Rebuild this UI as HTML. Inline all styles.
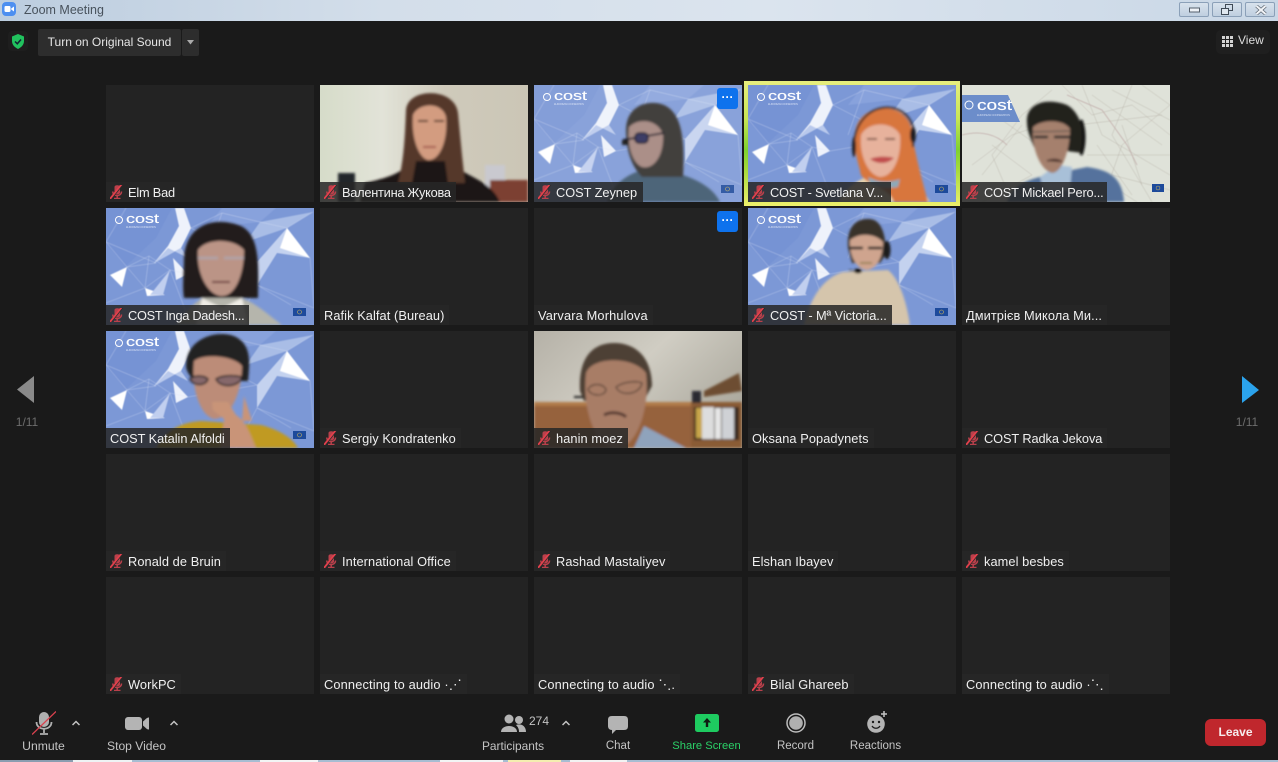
<!DOCTYPE html>
<html><head><meta charset="utf-8"><title>Zoom Meeting</title>
<style>
*{box-sizing:border-box}
html,body{margin:0;padding:0}
body{width:1278px;height:762px;overflow:hidden;background:#1a1a1a;position:relative;font-family:"Liberation Sans","Noto Sans CJK JP",sans-serif;color:#e8e8e8}
.abs{position:absolute}
#tb{left:0;top:0;width:1278px;height:21px;background:linear-gradient(90deg,#bccddf 0,#d3deea 30%,#dbe4ee 60%,#c9d7e6 100%)}
#tb span{position:absolute;left:24px;top:3px;font-size:12.500px;color:#48525c}
.wb{position:absolute;top:2px;width:30px;height:15px;border:1px solid #8ba0b8;border-radius:2px;background:linear-gradient(#d8e2ed,#bfcfe0)}
.t{position:absolute;width:208px;height:117px;background:#232323;overflow:hidden}
.t svg{position:absolute;left:0;top:0}
.l{position:absolute;left:0;bottom:0;height:20px;background:rgba(38,38,38,.86);font-size:12.800px;line-height:21px;padding:0 5px 0 4px;white-space:nowrap;color:#f0f0f0;letter-spacing:.08px}
.l.m{padding-left:22px}
.l.m svg{left:4px;top:3px}
.dots{position:absolute;right:4px;top:3px;width:21px;height:21px;background:#0e72ed;border-radius:3px;color:#fff;font-size:12px;font-weight:bold;line-height:19px;text-align:center;letter-spacing:0}
.tl{position:absolute;top:739px;font-size:11.500px;line-height:14px;color:#c4c4c4;transform:translateX(-50%);white-space:nowrap}
.car{position:absolute;top:720px}
.cost{font-family:"Liberation Sans",sans-serif;fill:#fff;font-size:13px;stroke:#fff;stroke-width:.15}
.cs{font-family:"Liberation Sans",sans-serif;fill:#dfe7f7;font-size:2.800px;opacity:.8}
.nv{position:absolute;top:415px;font-size:12px;line-height:14px;color:#6d6d6d;transform:translateX(-50%)}
</style></head><body>
<svg width="0" height="0" style="position:absolute">
<defs>
<filter id="b1"><feGaussianBlur stdDeviation="1.200"/></filter>
<filter id="b2"><feGaussianBlur stdDeviation=".4"/></filter>
<symbol id="net" viewBox="0 0 208 117">
<rect width="208" height="117" fill="#7c98d6"/>
<g filter="url(#b2)">
<path d="M0 0H66L50 30 20 58 0 36Z" fill="#7693d4"/>
<path d="M154 14 207 4 181 20 140 34Z" fill="#a9bde6"/>
<path d="M116 0H170L154 14 100 20Z" fill="#88a2dc"/>
<path d="M69 0H78L85 20 75 40 48 55 62 38 73 18Z" fill="#eef2fb"/>
<path d="M75 40 82 50 62 40 48 55Z" fill="#b9c9ec"/>
<path d="M181 20 204 50 171 45 151 77 151 54Z" fill="#c4d2ef"/>
<path d="M181 20 204 50 174 40Z" fill="#fff"/>
<path d="M4 67 21 59 16 79Z" fill="#fff"/>
<path d="M39 80 59 87 41 88Z" fill="#fff"/>
<path d="M67 50 82 66 70 72Z" fill="#eef2fb"/>
<path d="M44 87 64 62 57 87Z" fill="#c1cfef"/>
<g stroke="#dbe4f7" stroke-width=".45" fill="none" opacity=".65">
<path d="M0 34 50 55 21 59 43 48 64 62 82 66 151 54M43 48 39 80 64 62M21 59 39 80 0 95M85 20 116 5 154 14 181 20M85 20 151 54M116 5 100 50M204 50 208 100 151 77 185 97M0 34 20 0M0 34 21 59M151 77 130 117M64 62 85 117M181 20 207 4"/>
</g>
</g>
<rect x="187" y="100" width="13" height="8" fill="#1d4a9b"/>
<circle cx="193.500" cy="104" r="2" fill="none" stroke="#cbb45a" stroke-width=".6"/>
</symbol>
<symbol id="mic" viewBox="0 0 14 14">
<path d="M4.500 2C4.500 -.3 10 -.3 10 2L10 7.500C10 10 4.500 10 4.500 7.500Z" fill="#b9404b"/>
<path d="M2.800 6.500C2.800 12 11.500 12 11.500 6.500M7.200 11V13M4 13.500H10.500" stroke="#b9404b" stroke-width="1.500" fill="none"/>
<path d="M1 14.500 13 -.5" stroke="#2a2a2a" stroke-width="1"/>
<path d="M0 14 11.500 -.5" stroke="#e2404c" stroke-width="1.800"/>
</symbol>
</defs>
</svg>

<div id="tb" class="abs">
<svg class="abs" style="left:2px;top:2px" width="14" height="14" viewBox="0 0 14 14"><rect width="14" height="14" rx="4" fill="#4d8ff0"/><rect x="2.500" y="4" width="6" height="6" rx="1.200" fill="#fff"/><path d="M9.200 6.500 12 4.500V9.500L9.200 7.500Z" fill="#fff"/></svg>
<span>Zoom Meeting</span>
<div class="wb" style="left:1179px"><svg class="abs" style="left:9px;top:4px" width="12" height="6"><rect x=".5" y="1" width="10" height="4" fill="#eef2f7" stroke="#55606c"/></svg></div>
<div class="wb" style="left:1212px"><svg class="abs" style="left:8px;top:1px" width="13" height="12"><rect x="4.500" y=".5" width="7" height="6" fill="none" stroke="#3f4a56"/><rect x=".5" y="4.500" width="7" height="6" fill="#dfe7ef" stroke="#3f4a56"/></svg></div>
<div class="wb" style="left:1245px"><svg class="abs" style="left:9px;top:2px" width="12" height="10"><path d="M1.500 1 10.500 9M10.500 1 1.500 9" stroke="#59636e" stroke-width="3.400"/><path d="M1.500 1 10.500 9M10.500 1 1.500 9" stroke="#f2f4f7" stroke-width="2"/></svg></div>
</div>

<div class="abs" style="left:8px;top:31px;width:20px;height:20px;background:#1e1e1e;border-radius:4px"></div>
<svg class="abs" style="left:11px;top:34px" width="14" height="15" viewBox="0 0 14 15"><path d="M7 0 13 2.500V7C13 11 10 13.500 7 15 4 13.500 1 11 1 7V2.500Z" fill="#21c25e"/><path d="M4 7.500 6.300 9.800 10 5.500" stroke="#123" stroke-width="1.500" fill="none"/></svg>
<div class="abs" style="left:38px;top:29px;width:143px;height:27px;background:#2d2d2d;border-radius:2px;font-size:12px;line-height:26px;text-align:center;color:#e6e6e6">Turn on Original Sound</div>
<div class="abs" style="left:182px;top:29px;width:17px;height:27px;background:#2d2d2d;border-radius:2px"><svg class="abs" style="left:5px;top:11px" width="8" height="5"><path d="M0 0H7L3.500 4.500Z" fill="#aaa"/></svg></div>
<div class="abs" style="left:1216px;top:30px;width:54px;height:24px;background:#1f1f1f;border-radius:5px"></div>
<svg class="abs" style="left:1222px;top:36px" width="11" height="11"><g fill="#d4d4d4"><rect width="3" height="3"/><rect x="4" width="3" height="3"/><rect x="8" width="3" height="3"/><rect y="4" width="3" height="3"/><rect x="4" y="4" width="3" height="3"/><rect x="8" y="4" width="3" height="3"/><rect y="8" width="3" height="3"/><rect x="4" y="8" width="3" height="3"/><rect x="8" y="8" width="3" height="3"/></g></svg>
<div class="abs" style="left:1238px;top:33px;font-size:12px;line-height:15px;color:#ddd">View</div>

<svg class="abs" style="left:17px;top:376px" width="18" height="28"><path d="M0 13.500 17 0V27Z" fill="#8a8a8a"/></svg>
<div class="nv" style="left:27px">1/11</div>
<svg class="abs" style="left:1242px;top:376px" width="18" height="28"><path d="M17 14 0 0V27Z" fill="#2ba3ec"/></svg>
<div class="nv" style="left:1247px">1/11</div>

<!-- row 1 -->
<div class="t" style="left:106px;top:85px"><div class="l m" style="letter-spacing:-.2px"><svg width="14" height="14"><use href="#mic"/></svg>Elm Bad</div></div>

<div class="t" style="left:320px;top:85px">
<svg width="208" height="117" viewBox="0 0 208 117">
<defs><linearGradient id="w1" x1="0" x2="1" y1="0" y2="0"><stop offset="0" stop-color="#d6dcc9"/><stop offset=".3" stop-color="#e2e3d8"/><stop offset=".6" stop-color="#cfcabb"/><stop offset="1" stop-color="#cbc6b6"/></linearGradient></defs>
<rect width="208" height="117" fill="url(#w1)"/>
<g filter="url(#b1)">
<rect x="18" y="88" width="17" height="29" fill="#22262a"/>
<path d="M165 80h20v25h-20z" fill="#c9c9cf"/><rect x="170" y="95" width="38" height="22" fill="#7c3f30"/>
<path d="M45 98C70 92 85 88 92 72H128C135 90 170 92 180 117H40Z" fill="#1b1515"/>
<path d="M86 25C88 2 135 2 138 28L142 70 145 98H128L125 76H96L92 98H78C84 75 85 50 86 25Z" fill="#54382a"/>
<path d="M93 30C98 18 122 16 126 32 128 55 120 75 109 75 100 75 91 55 93 30Z" fill="#d39c80"/>
<path d="M98 36h10M114 36h10" stroke="#4a2f22" stroke-width="1.800"/><path d="M103 62h13" stroke="#a65a50" stroke-width="2"/>
</g></svg>
<div class="l m" style="letter-spacing:-.25px"><svg width="14" height="14"><use href="#mic"/></svg>Валентина Жукова</div></div>

<div class="t" style="left:534px;top:85px">
<svg width="208" height="117" viewBox="0 0 208 117"><use href="#net" width="208" height="117"/>
<rect width="208" height="117" fill="#fff" opacity=".1"/>
<text class="cost" x="20" y="15" textLength="33" lengthAdjust="spacingAndGlyphs">cost</text><circle cx="13" cy="12" r="3.500" fill="none" stroke="#fff"/><text class="cs" x="20" y="20" textLength="30">EUROPEAN COOPERATION</text>
<g filter="url(#b1)">
<path d="M73 117C78 100 92 90 108 85L130 85C155 90 178 100 186 117Z" fill="#4d6579"/>
<path d="M92 45C92 20 115 14 130 20 148 28 151 55 149 92H108C96 80 92 62 92 45Z" fill="#42403e"/>
<path d="M95 42C105 32 125 35 129 50 130 70 120 85 108 82 98 78 93 60 95 42Z" fill="#ab8f88"/>
<path d="M89 55 130 48" stroke="#17192a" stroke-width="1.800"/><rect x="101" y="48" width="13" height="10" rx="4" fill="#3e3c66" stroke="#17192a" stroke-width="1.500"/>
<rect x="88" y="55" width="7" height="5" fill="#222"/></g>
</svg>
<div class="dots">···</div>
<div class="l m" style="padding-right:6px;letter-spacing:-.05px"><svg width="14" height="14"><use href="#mic"/></svg>COST Zeynep</div></div>

<div class="abs" style="left:744px;top:81px;width:216px;height:125px;background:linear-gradient(#e7ee7e 0,#c9e655 30%,#7fd12f 55%,#a4da39 70%,#eef06c 100%)"></div>
<div class="t" style="left:748px;top:85px;height:117px">
<svg width="208" height="117" viewBox="0 0 208 117"><use href="#net" width="208" height="117"/>
<text class="cost" x="20" y="15" textLength="33" lengthAdjust="spacingAndGlyphs">cost</text><circle cx="13" cy="12" r="3.500" fill="none" stroke="#fff"/><text class="cs" x="20" y="20" textLength="30">EUROPEAN COOPERATION</text>
<g filter="url(#b1)">
<path d="M90 117C100 100 112 94 124 90H150C165 92 175 105 182 117Z" fill="#e8d4ae"/>
<path d="M107 50C108 18 155 14 163 42 166 65 174 95 180 117H146C140 100 112 100 112 85 108 72 106 60 107 50Z" fill="#d8763e"/>
<path d="M113 50C120 36 145 36 152 50 154 70 146 92 132 92 120 90 111 70 113 50Z" fill="#e7b29c"/>
<path d="M119 54h10M137 54h10" stroke="#5a3328" stroke-width="1.500"/><path d="M122 74C130 80 140 79 146 73 140 71 128 71 122 74Z" fill="#c14e4e"/>
<path d="M106 62C106 18 155 10 165 42V62" fill="none" stroke="#1d1d22" stroke-width="1.800"/><ellipse cx="106" cy="62" rx="2" ry="10" fill="#1d1d22"/><ellipse cx="165" cy="50" rx="3" ry="8" fill="#1d1d22"/>
<path d="M120 92C128 96 138 99 152 94L150 102C138 104 128 102 122 99Z" fill="#8ea9b8"/></g>
</svg>
<div class="l m" style="padding-right:8px;letter-spacing:-.25px"><svg width="14" height="14"><use href="#mic"/></svg>COST - Svetlana V...</div></div>

<div class="t" style="left:962px;top:85px">
<svg width="208" height="117" viewBox="0 0 208 117">
<rect width="208" height="117" fill="#dfe2d9"/>
<g stroke="#b3aca2" stroke-width=".4" fill="none" opacity=".9" filter="url(#b2)"><path d="M100 0 130 30 170 20 208 50M120 0 140 50 208 90M170 0 150 50 190 117M90 5 60 30 30 70 50 117M208 20 160 60 140 117M30 60 70 90 20 117M10 80 50 50 80 40M40 35 75 60M150 5 208 35M125 70 208 70M150 90 208 105M160 40 180 100M130 10 200 60M115 40 200 30M125 85 175 117M60 40 20 90M180 0 208 20M135 60 170 110"/><path d="M0 50C20 45 35 50 45 60M105 10 140 25 165 60 175 80" stroke="#c0aaa8" stroke-width=".8"/></g>
<path d="M0 10H46L58 37H0Z" fill="#6c8dca"/>
<text class="cost" x="15" y="25" style="font-size:15px" textLength="35" lengthAdjust="spacingAndGlyphs">cost</text><circle cx="7" cy="20" r="4" fill="none" stroke="#fff"/><text class="cs" x="15" y="31" textLength="33">EUROPEAN COOPERATION</text>
<rect x="190" y="99" width="12" height="8" fill="#1d4a9b"/><circle cx="196" cy="103" r="2" fill="none" stroke="#cbb45a" stroke-width=".5"/>
<g filter="url(#b1)">
<path d="M45 117C50 100 65 95 85 90L125 82C145 85 160 90 162 117Z" fill="#54729d"/>
<path d="M78 92 95 80 110 82 108 105 82 108Z" fill="#a8c0d8"/>
<path d="M65 38C63 18 85 12 105 20 120 28 125 55 121 68L72 62C68 52 65 45 65 38Z" fill="#22201f"/>
<path d="M71 42C80 34 102 34 108 44 108 65 100 88 90 88 78 85 69 62 71 42Z" fill="#a5806d"/>
<path d="M72 52H86M92 52H108" stroke="#2c2a2a" stroke-width="2.500"/><path d="M70 47 108 46" stroke="#444" stroke-width="1"/><path d="M85 76C90 74 96 74 100 77" stroke="#5a3c36" stroke-width="2"/>
<path d="M119 35C123 45 123 60 119 70" stroke="#111" stroke-width="3" fill="none"/></g>
</svg>
<div class="l m" style="padding-right:3px;letter-spacing:-.2px"><svg width="14" height="14"><use href="#mic"/></svg>COST Mickael Pero...</div></div>

<!-- row 2 -->
<div class="t" style="left:106px;top:208px">
<svg width="208" height="117" viewBox="0 0 208 117"><use href="#net" width="208" height="117"/>
<text class="cost" x="20" y="15" textLength="33" lengthAdjust="spacingAndGlyphs">cost</text><circle cx="13" cy="12" r="3.500" fill="none" stroke="#fff"/><text class="cs" x="20" y="20" textLength="30">EUROPEAN COOPERATION</text>
<g filter="url(#b1)">
<path d="M70 117C82 100 92 92 100 88L135 90C150 95 160 105 176 117Z" fill="#b5b5ac"/>
<path d="M78 50C80 15 110 8 135 18 155 28 152 60 152 90H78C76 78 78 65 78 50Z" fill="#241a1c"/>
<path d="M92 42C100 30 128 30 138 42 138 65 130 88 116 88 102 88 90 65 92 42Z" fill="#bb9486"/>
<path d="M92 50H112M118 50H138" stroke="#aab" stroke-width="3" opacity=".6"/><path d="M106 74H124" stroke="#6b3d3b" stroke-width="2"/>
<path d="M96 90 116 100 136 90 142 117H90Z" fill="#f0ede6"/></g>
</svg>
<div class="l m" style="letter-spacing:-.3px"><svg width="14" height="14"><use href="#mic"/></svg>COST Inga Dadesh...</div></div>

<div class="t" style="left:320px;top:208px"><div class="l">Rafik Kalfat (Bureau)</div></div>
<div class="t" style="left:534px;top:208px"><div class="dots">···</div><div class="l" style="letter-spacing:.15px">Varvara Morhulova</div></div>

<div class="t" style="left:748px;top:208px">
<svg width="208" height="117" viewBox="0 0 208 117"><use href="#net" width="208" height="117"/>
<text class="cost" x="20" y="15" textLength="33" lengthAdjust="spacingAndGlyphs">cost</text><circle cx="13" cy="12" r="3.500" fill="none" stroke="#fff"/><text class="cs" x="20" y="20" textLength="30">EUROPEAN COOPERATION</text>
<g filter="url(#b1)">
<path d="M56 117C62 90 75 70 95 64L140 62C150 70 158 90 162 117Z" fill="#d5c5ac"/>
<path d="M100 40C98 15 112 10 122 11 134 12 138 28 138 46L132 55H104Z" fill="#37302c"/>
<path d="M102 32C112 24 128 26 135 34 135 50 128 62 118 62 108 60 101 48 102 32Z" fill="#cfa48e"/>
<path d="M102 40H115M120 40H134" stroke="#1a1a1a" stroke-width="2.500"/><path d="M112 55H124" stroke="#874" stroke-width="1.500"/>
<ellipse cx="139" cy="42" rx="3.500" ry="9" fill="#1c1c1f"/><path d="M101 62C105 63 110 64 112 62" stroke="#111" stroke-width="1" fill="none"/><ellipse cx="110" cy="63" rx="4" ry="2.500" fill="#111"/>
</g>
</svg>
<div class="l m" style="letter-spacing:-.1px"><svg width="14" height="14"><use href="#mic"/></svg>COST - Mª Victoria...</div></div>

<div class="t" style="left:962px;top:208px"><div class="l">Дмитрієв Микола Ми...</div></div>

<!-- row 3 -->
<div class="t" style="left:106px;top:331px">
<svg width="208" height="117" viewBox="0 0 208 117"><use href="#net" width="208" height="117"/>
<text class="cost" x="20" y="15" textLength="33" lengthAdjust="spacingAndGlyphs">cost</text><circle cx="13" cy="12" r="3.500" fill="none" stroke="#fff"/><text class="cs" x="20" y="20" textLength="30">EUROPEAN COOPERATION</text>
<g filter="url(#b1)">
<path d="M50 117C60 100 72 92 95 90L155 94C170 98 185 105 192 117Z" fill="#c09a20"/>
<path d="M80 35C80 5 115 -2 130 6 145 14 144 30 142 50L88 50C84 45 80 40 80 35Z" fill="#242022"/>
<path d="M88 30C98 22 128 25 136 35 136 60 125 88 108 88 95 85 85 60 88 30Z" fill="#bc8c78"/>
<path d="M84 48C88 44 98 44 102 48 100 55 88 56 84 48ZM110 48C116 44 128 44 136 46 134 56 114 58 110 48Z" fill="#86686a" stroke="#1e1a1e" stroke-width="1.500"/>
<path d="M106 71H122L130 84C140 90 145 105 150 117H115C115 105 118 95 118 88L107 79Z" fill="#c99478"/><path d="M138 65 146 90 136 90Z" fill="#c99478"/></g>
</svg>
<div class="l" style="letter-spacing:-.05px">COST Katalin Alfoldi</div></div>

<div class="t" style="left:320px;top:331px"><div class="l m"><svg width="14" height="14"><use href="#mic"/></svg>Sergiy Kondratenko</div></div>

<div class="t" style="left:534px;top:331px">
<svg width="208" height="117" viewBox="0 0 208 117">
<defs><linearGradient id="w2" x1="0" x2="1" y1="0" y2=".6"><stop offset="0" stop-color="#b5b1a7"/><stop offset=".5" stop-color="#d0cdc3"/><stop offset="1" stop-color="#aca99e"/></linearGradient></defs>
<rect width="208" height="117" fill="url(#w2)"/>
<g filter="url(#b1)">
<rect x="0" y="74" width="208" height="43" fill="#96623c"/><rect x="0" y="71" width="160" height="4" fill="#b17a4a"/>
<rect x="157" y="71" width="51" height="46" fill="#8a5b36"/><rect x="160" y="76" width="45" height="33" fill="#3a2c20"/>
<rect x="162" y="77" width="6" height="30" fill="#c7a54a"/><rect x="168" y="76" width="12" height="32" fill="#ddd"/><rect x="181" y="77" width="6" height="31" fill="#e7e7e7"/><rect x="188" y="77" width="12" height="31" fill="#cfd1d5"/>
<path d="M170 60 205 42 208 60 170 66Z" fill="#6d4e33"/><rect x="158" y="60" width="9" height="12" fill="#2a2a30"/>
<path d="M110 95 152 117H100Z" fill="#8fa3bc"/>
<path d="M46 60C44 25 60 11 82 12 105 13 118 30 118 55L112 66 50 70Z" fill="#4e4134"/>
<path d="M52 42C58 25 100 25 112 42 116 75 104 117 82 117 60 117 48 75 52 42Z" fill="#a87d66"/>
<path d="M54 58C58 52 68 52 72 58 72 66 56 66 54 58ZM82 56C90 50 104 50 108 52 106 64 86 66 82 56Z" fill="none" stroke="#2e2620" stroke-width="1"/><path d="M70 84C78 80 88 82 92 86" stroke="#573a30" stroke-width="3" fill="none"/>
<path d="M40 66 50 66" stroke="#222" stroke-width="2"/>
</g>
</svg>
<div class="l m"><svg width="14" height="14"><use href="#mic"/></svg>hanin moez</div></div>

<div class="t" style="left:748px;top:331px"><div class="l">Oksana Popadynets</div></div>
<div class="t" style="left:962px;top:331px"><div class="l m" style="letter-spacing:-.1px"><svg width="14" height="14"><use href="#mic"/></svg>COST Radka Jekova</div></div>

<!-- row 4 -->
<div class="t" style="left:106px;top:454px"><div class="l m"><svg width="14" height="14"><use href="#mic"/></svg>Ronald de Bruin</div></div>
<div class="t" style="left:320px;top:454px"><div class="l m"><svg width="14" height="14"><use href="#mic"/></svg>International Office</div></div>
<div class="t" style="left:534px;top:454px"><div class="l m"><svg width="14" height="14"><use href="#mic"/></svg>Rashad Mastaliyev</div></div>
<div class="t" style="left:748px;top:454px"><div class="l">Elshan Ibayev</div></div>
<div class="t" style="left:962px;top:454px"><div class="l m"><svg width="14" height="14"><use href="#mic"/></svg>kamel besbes</div></div>

<!-- row 5 -->
<div class="t" style="left:106px;top:577px"><div class="l m"><svg width="14" height="14"><use href="#mic"/></svg>WorkPC</div></div>
<div class="t" style="left:320px;top:577px"><div class="l" style="letter-spacing:.15px">Connecting to audio ·⋰</div></div>
<div class="t" style="left:534px;top:577px"><div class="l" style="letter-spacing:.15px">Connecting to audio ⋱.</div></div>
<div class="t" style="left:748px;top:577px"><div class="l m"><svg width="14" height="14"><use href="#mic"/></svg>Bilal Ghareeb</div></div>
<div class="t" style="left:962px;top:577px"><div class="l" style="letter-spacing:.15px">Connecting to audio ·⋱</div></div>

<!-- toolbar -->
<svg class="abs" style="left:32px;top:711px" width="24" height="25" viewBox="0 0 24 25"><rect x="7" y="1" width="10" height="15" rx="5" fill="#b0b0b0"/><path d="M4.500 11C4.500 20 19.500 20 19.500 11M12 18V22M8 23H16" stroke="#b0b0b0" stroke-width="1.800" fill="none"/><path d="M0 23.500 24 .5" stroke="#d9414e" stroke-width="1.300"/></svg>
<div class="tl" style="left:43.500px;font-size:12.200px">Unmute</div>
<svg class="car" style="left:72px" width="8" height="6"><path d="M.5 5 4 1.500 7.500 5" stroke="#c4c4c4" stroke-width="1.500" fill="none"/></svg>
<svg class="abs" style="left:125px;top:717px" width="25" height="13" viewBox="0 0 25 13"><rect width="17" height="13" rx="3" fill="#b4b4b4"/><path d="M18 4.500C20 3 22 0 24 .5V12.500C22 13 20 10 18 8.500Z" fill="#b4b4b4"/></svg>
<div class="tl" style="left:136.500px;font-size:12.100px">Stop Video</div>
<svg class="car" style="left:170px" width="8" height="6"><path d="M.5 5 4 1.500 7.500 5" stroke="#c4c4c4" stroke-width="1.500" fill="none"/></svg>

<svg class="abs" style="left:501px;top:714px" width="25" height="19" viewBox="0 0 25 19"><circle cx="8" cy="5" r="4.500" fill="#b4b4b4"/><circle cx="18" cy="6" r="4" fill="#b4b4b4"/><path d="M0 18C0 10 16 10 16 18Z" fill="#b4b4b4"/><path d="M15 11C20 9 25 12 25 18H18C18 15 17 13 15 11Z" fill="#b4b4b4"/></svg>
<div class="abs" style="left:529px;top:714px;font-size:12px;line-height:14px;color:#c4c4c4">274</div>
<svg class="car" style="left:562px" width="8" height="6"><path d="M.5 5 4 1.500 7.500 5" stroke="#c4c4c4" stroke-width="1.500" fill="none"/></svg>
<div class="tl" style="left:513px;font-size:11.900px">Participants</div>
<svg class="abs" style="left:608px;top:716px" width="20" height="18" viewBox="0 0 20 18"><path d="M4 0H16C19 0 20 1.500 20 4V10C20 12.500 19 14 16 14H8L4 18V14C1.500 14 0 12.500 0 10V4C0 1.500 1 0 4 0Z" fill="#b4b4b4"/></svg>
<div class="tl" style="left:618px">Chat</div>
<svg class="abs" style="left:695px;top:714px" width="24" height="18" viewBox="0 0 24 18"><rect width="24" height="18" rx="2.500" fill="#1ecb60"/><path d="M12 4 8 8.500H10.800V13H13.200V8.500H16Z" fill="#0f1a12"/></svg>
<div class="tl" style="left:706.500px;color:#2bd168;font-size:11.200px">Share Screen</div>
<svg class="abs" style="left:786px;top:713px" width="20" height="20" viewBox="0 0 20 20"><circle cx="10" cy="10" r="9" fill="none" stroke="#bdbdbd" stroke-width="1.500"/><circle cx="10" cy="10" r="6.800" fill="#b0b0b0"/></svg>
<div class="tl" style="left:795.500px">Record</div>
<svg class="abs" style="left:866px;top:711px" width="22" height="22" viewBox="0 0 22 22"><circle cx="10" cy="13" r="8.800" fill="#b4b4b4"/><circle cx="7" cy="11" r="1.200" fill="#1a1a1a"/><circle cx="13" cy="11" r="1.200" fill="#1a1a1a"/><path d="M6 15C8 18 12 18 14 15" stroke="#1a1a1a" stroke-width="1.300" fill="none"/><path d="M18 0V6M15 3H21" stroke="#c4c4c4" stroke-width="1.500"/></svg>
<div class="tl" style="left:875.500px">Reactions</div>

<div class="abs" style="left:1205px;top:719px;width:61px;height:27px;background:#c0272d;border-radius:6px;color:#f6eded;font-size:12px;font-weight:bold;text-align:center;line-height:27px">Leave</div>

<div class="abs" style="left:0;top:760px;width:1278px;height:2px;background:linear-gradient(90deg,#8a9db0 0,#8a9db0 73px,#eef3f4 73px,#eef3f4 132px,#a7bdd2 132px,#a7bdd2 260px,#f2f4f4 260px,#f2f4f4 318px,#a7bdd2 318px,#a7bdd2 440px,#f2f4f4 440px,#f2f4f4 503px,#a7bdd2 503px,#a7bdd2 508px,#f4eeb0 508px,#f4eeb0 561px,#a7bdd2 561px,#a7bdd2 570px,#f2f2f2 570px,#f2f2f2 627px,#a7bdd2 627px)"></div>
</body></html>
